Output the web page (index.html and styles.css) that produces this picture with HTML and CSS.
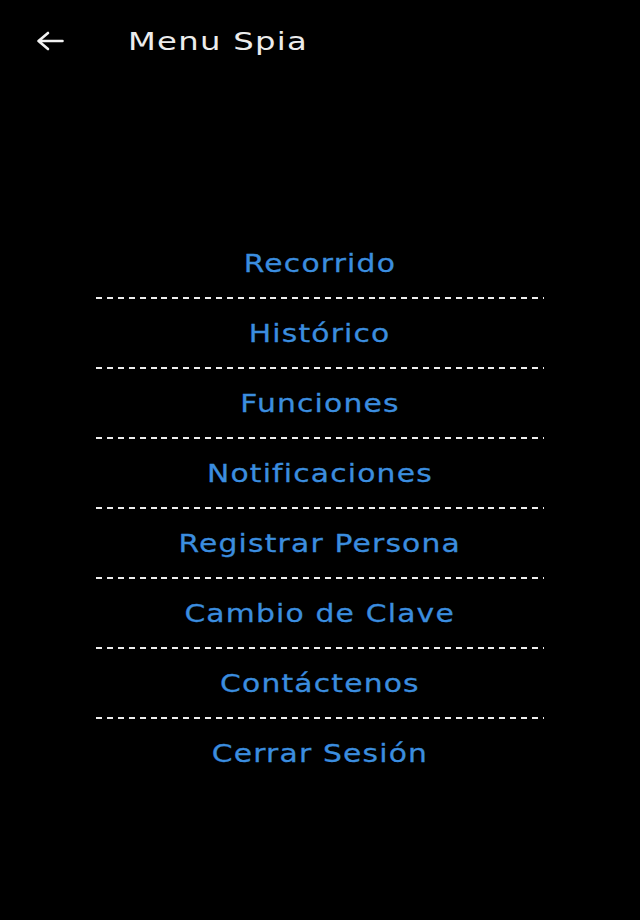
FILE: index.html
```html
<!DOCTYPE html>
<html lang="es">
<head>
    <meta charset="UTF-8">
    <meta name="viewport" content="width=device-width, initial-scale=1.0">
    <title>Menu Spia</title>
    <link rel="stylesheet" href="styles.css">
</head>
<body>
    <div class="header">
        <span class="back">
            <svg width="28" height="20" viewBox="0 0 28 20">
                <path d="M26.5 10 H2.5 M12 2 L2.5 10 L12 18" fill="none" stroke="#f2f2f2" stroke-width="2.6" stroke-linecap="round" stroke-linejoin="round"/>
            </svg>
        </span>
        <span class="title">Menu Spia</span>
    </div>

    <div class="menu">
        <div class="item">Recorrido</div>
        <div class="sep"></div>
        <div class="item">Histórico</div>
        <div class="sep"></div>
        <div class="item">Funciones</div>
        <div class="sep"></div>
        <div class="item">Notificaciones</div>
        <div class="sep"></div>
        <div class="item">Registrar Persona</div>
        <div class="sep"></div>
        <div class="item">Cambio de Clave</div>
        <div class="sep"></div>
        <div class="item">Contáctenos</div>
        <div class="sep"></div>
        <div class="item">Cerrar Sesión</div>
    </div>
</body>
</html>
```

FILE: styles.css
```css
body {
    margin: 0;
    background: #000;
    font-family: "DejaVu Sans", "Noto Sans", sans-serif;
    min-height: 100vh;
}

.header {
    display: flex;
    align-items: center;
    height: 82px;
    padding-left: 36px;
}

.back {
    display: flex;
    width: 92px;
}

/* the screenshot is stretched wide, so are the letters */
.title {
    display: inline-block;
    color: #ececec;
    font-size: 25px;
    letter-spacing: 1px;
    transform: scaleX(1.29);
    transform-origin: left center;
}

.menu {
    display: flex;
    flex-direction: column;
    align-items: center;
    padding-top: 164px;
}

.item {
    color: #3b8ddf;
    font-size: 25px;
    line-height: 36px;
    letter-spacing: 1px;
    -webkit-text-stroke: 0.3px #3b8ddf;
    transform: scaleX(1.19);
}

.sep {
    width: 448px;
    height: 2px;
    margin: 15px 0 17px;
    background: repeating-linear-gradient(to right, #eeeeee 0 6px, transparent 6px 10.9px);
}
```
